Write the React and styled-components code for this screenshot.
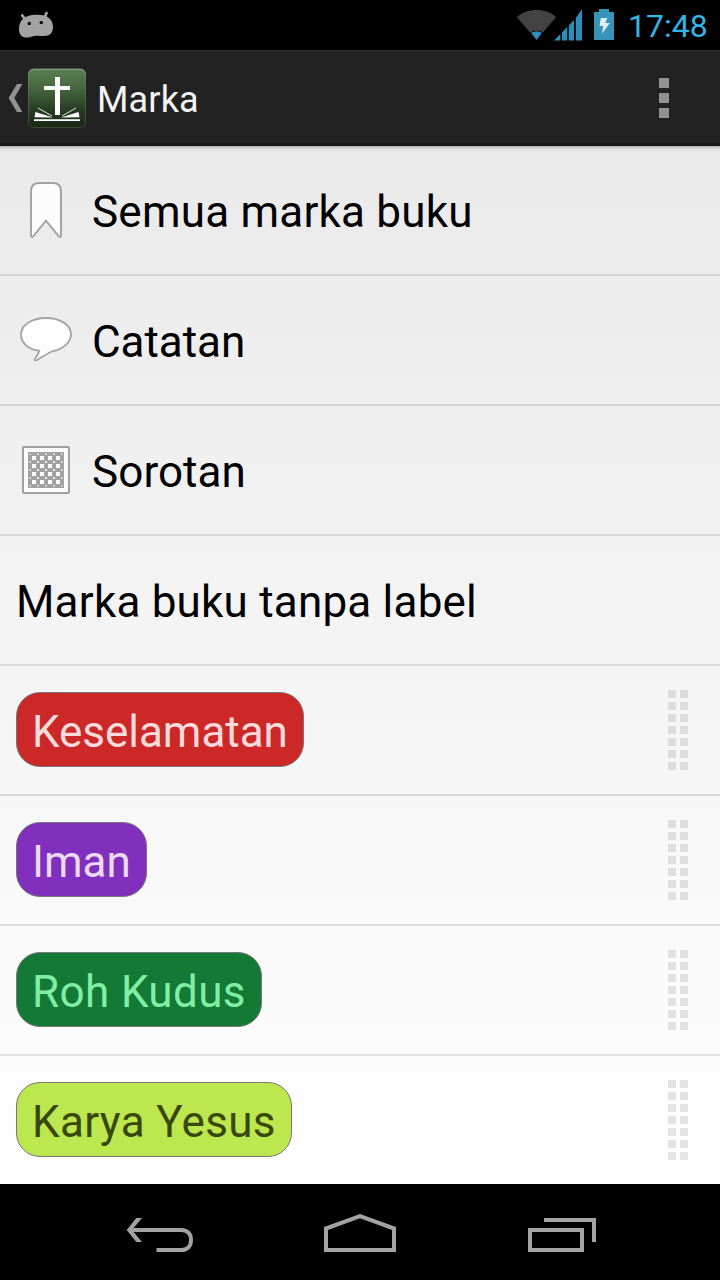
import React from "react";
import styled, { createGlobalStyle } from "styled-components";

const GlobalStyle = createGlobalStyle`
  * { box-sizing: border-box; }
  body { margin: 0; background: #000; font-family: Roboto, "Liberation Sans", sans-serif; }
  svg { display: block; flex: none; }
`;

const Screen = styled.div`
  width: 720px;
  height: 1280px;
  display: flex;
  flex-direction: column;
  overflow: hidden;
  background: #000;
`;

const StatusBar = styled.header`
  height: 50px;
  display: flex;
  align-items: flex-start;
  justify-content: space-between;
  padding: 0 12px 0 16px;
  background: #000;
`;

const StatusIcons = styled.div`
  display: flex;
`;

const Clock = styled.time`
  width: 80px;
  margin-left: 12px;
  padding-top: 6px;
  font-size: 32px;
  line-height: 40px;
  white-space: nowrap;
  color: #33b5e5;
`;

const ActionBar = styled.div`
  height: 96px;
  display: flex;
  align-items: center;
  box-shadow: inset 0 1px #303030;
  background: linear-gradient(#222 0 92px, #1a1a1a 94px, #141215 96px);
`;

const UpButton = styled.button`
  display: flex;
  align-items: center;
  gap: 5px;
  padding: 0 0 0 8px;
  border: 0;
  background: none;
`;

const Title = styled.h1`
  flex: 1;
  margin: 0;
  padding: 4px 0 0 11px;
  font-size: 36px;
  line-height: 44px;
  font-weight: 400;
  letter-spacing: 0.15px;
  color: #f3f3f3;
`;

const Overflow = styled.button`
  display: grid;
  gap: 5px;
  margin-right: 51px;
  padding: 0;
  border: 0;
  background: none;
`;

const OverflowDot = styled.span`
  width: 10px;
  height: 10px;
  background: #929292;
`;

const List = styled.ul`
  flex: 1;
  margin: 0;
  padding: 0;
  list-style: none;
  background: linear-gradient(rgba(0, 0, 0, 0.24), rgba(0, 0, 0, 0.03) 3px, transparent 7px),
    linear-gradient(#eaeaea, #fff);
`;

const Row = styled.li`
  height: 130px;
  display: flex;
  align-items: center;
  padding: 0 32px 0 16px;
  border-bottom: 2px solid rgba(0, 0, 0, 0.11);

  &:last-child {
    height: 128px;
    border-bottom: 0;
  }
`;

const IconSlot = styled.span`
  width: 60px;
  height: 64px;
  margin-right: 16px;
`;

const RowLabel = styled.span`
  padding-top: 4px;
  font-size: 44px;
  line-height: 52px;
  letter-spacing: ${(p) => p.$spacing}px;
  white-space: nowrap;
  color: #000;
`;

const Chip = styled.span`
  width: ${(p) => p.$width}px;
  height: 75px;
  margin: -1px auto 0 0;
  padding: 13px 0 0 15px;
  border: 1px solid #777;
  border-radius: 24px;
  font-size: 44px;
  line-height: 52px;
  letter-spacing: ${(p) => p.$spacing}px;
  white-space: nowrap;
  background: ${(p) => p.$fill};
  color: ${(p) => p.$ink};
`;

const DragHandle = styled.span`
  display: grid;
  grid-template-columns: 8px 8px;
  grid-auto-rows: 8px;
  gap: 4px;
`;

const DragDot = styled.i`
  background: rgba(0, 0, 0, 0.1);
`;

const NavBar = styled.nav`
  height: 96px;
  display: flex;
  justify-content: center;
  background: #000;
`;

const NavButton = styled.button`
  width: 200px;
  height: 96px;
  padding: 0;
  border: 0;
  background: none;
`;

const AndroidIcon = () => (
  <svg width="40" height="50" viewBox="16 0 40 50">
    <path
      d="M22.3 15.5 L25.5 20 M46.5 13 L44.5 18"
      stroke="#a3a3a3"
      strokeWidth="2.8"
      strokeLinecap="round"
    />
    <path
      d="M19 29C19 20 25 15.2 36 14.8C47 14.4 53 19 53 27C53 33 49.5 36 44.5 36C40 36 37 35.2 34 36C31 36.8 29 37.7 26 37.5C21.5 37.2 19 34.5 19 29Z"
      fill="#a3a3a3"
    />
    <circle cx="29.3" cy="23.5" r="1.7" fill="#000" />
    <circle cx="41.3" cy="22.6" r="1.7" fill="#000" />
    <path d="M33.5 28v1M33.5 31v1M38 28v.7" stroke="#8a8a8a" />
  </svg>
);

const SignalIcons = () => (
  <svg width="100" height="50" viewBox="516 0 100 50">
    <path d="M516.7 17C527 7.6 546 7.6 556.2 17L536.5 40Z" fill="#424242" />
    <path
      d="M531 32.8Q536.5 29.500 542 32.800L536.5 40Z"
      fill="#2b8db8"
      stroke="#000"
      strokeWidth="1.4"
      paintOrder="stroke"
    />
    <path
      d="M554 40.6L560.4 34V40.6ZM562 40.6V32.3L567.2 27V40.6ZM568.8 40.6V25.3L574 20V40.6ZM575.8 40.6V18L582 9V40.6Z"
      fill="#2b8db8"
    />
    <path d="M594 12H599V9H609V12H614V40H594Z" fill="#3793b8" />
    <path d="M600.8 18H607.5L605.3 23H609.8L601.8 34L603.4 26H599.5Z" fill="#e0edf2" />
  </svg>
);

const UpChevron = () => (
  <svg width="15" height="60" viewBox="8 68 15 60">
    <path d="M17 84H22.3L14.3 98L22.3 112H17L8.6 98Z" fill="#929292" />
  </svg>
);

const AppIcon = () => (
  <svg width="58" height="60" viewBox="28 68 58 60">
    <defs>
      <linearGradient id="appFill" x1="0" y1="0" x2="0" y2="1">
        <stop offset="0" stopColor="#587f52" />
        <stop offset="0.3" stopColor="#48693f" />
        <stop offset="0.68" stopColor="#283f25" />
        <stop offset="1" stopColor="#192814" />
      </linearGradient>
      <linearGradient id="appEdge" x1="0" y1="0" x2="0" y2="1">
        <stop offset="0" stopColor="#a3b8a0" />
        <stop offset="0.12" stopColor="#5c7f57" />
        <stop offset="1" stopColor="#3b4638" />
      </linearGradient>
    </defs>
    <rect x="28.500" y="69.2" width="57" height="58.3" rx="5" fill="url(#appFill)" stroke="url(#appEdge)" />
    <path d="M55 77H60V86H70V90H60V115H55V90H44V86H55Z" fill="#fff" />
    <path d="M35.5 112L53 117.5L34.5 117.2ZM78.5 112L61 117.5L79.5 117.2Z" fill="#fff" />
    <path d="M38 108L52 116M76 108L62 116" stroke="#dfe6dd" strokeWidth="1" />
    <path d="M34 120.2H80" stroke="#fff" strokeWidth="1.7" />
  </svg>
);

const BookmarkIcon = () => (
  <svg width="60" height="64" viewBox="16 178 60 64">
    <path
      d="M38.5 183H53.5Q61 183.5 61 191V235.5Q60.5 238 58.8 236.4L46 220.7L33.2 236.4Q31.5 238 31 235.5V191Q31 183.5 38.5 183Z"
      fill="#fcfcfc"
      stroke="#a1a1a1"
      strokeWidth="1.9"
    />
  </svg>
);

const NoteIcon = () => (
  <svg width="60" height="64" viewBox="16 308 60 64">
    <path
      d="M46 318C60.2 318 71 325 71 334C71 342 64 348.5 53.5 351C47 353 42 357.5 36.5 360.2C34.8 361 34 360 35 358.5C37 356 38.5 353.5 39.3 350.7C28.5 349.5 21 343 21 334.5C21 325 31.800 318 46 318Z"
      fill="#fdfdfd"
      stroke="#a3a3a3"
      strokeWidth="1.8"
    />
  </svg>
);

const HighlightIcon = () => (
  <svg width="60" height="64" viewBox="16 438 60 64">
    <defs>
      <pattern id="weave" x="32" y="456" width="8" height="8" patternUnits="userSpaceOnUse">
        <rect width="4" height="4" fill="#fff" />
        <rect x="5" y="5" width="2" height="2" fill="#e6e6e6" />
      </pattern>
    </defs>
    <rect x="23" y="447" width="46" height="46" rx="1" fill="#fdfdfd" stroke="#a1a1a1" strokeWidth="2" />
    <rect x="28" y="452" width="36" height="36" fill="#a1a1a1" />
    <rect x="29.500" y="453.500" width="33" height="33" fill="url(#weave)" />
  </svg>
);

const BackIcon = () => (
  <svg width="200" height="96" viewBox="60 1184 200 96" fill="none" stroke="#a3a3a3" strokeWidth="4">
    <path d="M130 1230H181C188 1230 191 1234.5 191 1240C191 1245.5 188 1250 181 1250H156.5" />
    <path d="M136.3 1218H142L132 1230L142 1242H136.3L126.7 1230Z" fill="#a3a3a3" stroke="none" />
  </svg>
);

const HomeIcon = () => (
  <svg width="200" height="96" viewBox="260 1184 200 96" fill="none" stroke="#a3a3a3" strokeWidth="4">
    <path d="M326 1250V1228.5L360 1216.2L394 1228.5V1250Z" />
  </svg>
);

const RecentIcon = () => (
  <svg width="200" height="96" viewBox="460 1184 200 96" fill="none" stroke="#a3a3a3" strokeWidth="4">
    <path d="M530 1230H582V1250H530ZM544 1220H594V1242" />
  </svg>
);

const shortcuts = [
  { label: "Semua marka buku", icon: <BookmarkIcon />, spacing: 0.22 },
  { label: "Catatan", icon: <NoteIcon />, spacing: -0.05 },
  { label: "Sorotan", icon: <HighlightIcon />, spacing: 0.08 },
  { label: "Marka buku tanpa label", spacing: 0.21 },
];

const labels = [
  { name: "Keselamatan", fill: "#cd2828", ink: "#fadada", width: 288, spacing: -0.03 },
  { name: "Iman", fill: "#8130bd", ink: "#ebdaf8", width: 131, spacing: 0 },
  { name: "Roh Kudus", fill: "#147935", ink: "#80efa5", width: 246, spacing: 0.38 },
  { name: "Karya Yesus", fill: "#bde74e", ink: "#384809", width: 276, spacing: 0.33 },
];

export default function App() {
  return (
    <Screen>
      <GlobalStyle />
      <StatusBar>
        <AndroidIcon />
        <StatusIcons>
          <SignalIcons />
          <Clock>17:48</Clock>
        </StatusIcons>
      </StatusBar>
      <ActionBar>
        <UpButton>
          <UpChevron />
          <AppIcon />
        </UpButton>
        <Title>Marka</Title>
        <Overflow>
          <OverflowDot />
          <OverflowDot />
          <OverflowDot />
        </Overflow>
      </ActionBar>
      <List>
        {shortcuts.map((s) => (
          <Row key={s.label}>
            {s.icon && <IconSlot>{s.icon}</IconSlot>}
            <RowLabel $spacing={s.spacing}>{s.label}</RowLabel>
          </Row>
        ))}
        {labels.map((l) => (
          <Row key={l.name}>
            <Chip $fill={l.fill} $ink={l.ink} $width={l.width} $spacing={l.spacing}>
              {l.name}
            </Chip>
            <DragHandle>
              {Array.from({ length: 14 }, (_, i) => (
                <DragDot key={i} />
              ))}
            </DragHandle>
          </Row>
        ))}
      </List>
      <NavBar>
        <NavButton><BackIcon /></NavButton>
        <NavButton><HomeIcon /></NavButton>
        <NavButton><RecentIcon /></NavButton>
      </NavBar>
    </Screen>
  );
}
